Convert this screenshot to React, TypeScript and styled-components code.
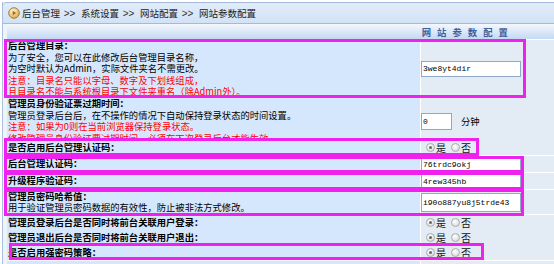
import React from "react"
import styled, { createGlobalStyle } from "styled-components"

const GlobalStyle = createGlobalStyle`
  html, body {
    margin: 0;
    overflow: hidden;
    background: #ffffff;
  }
  body {
    font-family: "Noto Sans CJK SC", "Noto Sans", sans-serif;
    color: #000;
  }
`

const Page = styled.div`
  margin-left: 2px;
  border-left: 1px solid #a9bfdd;
  min-height: 264px;
  background: #eef4fb;
`

const Crumb = styled.div`
  margin-top: 2px;
  height: 20px;
  border-top: 1px solid #a3badb;
  border-bottom: 1px solid #a3badb;
  border-top-left-radius: 4px;
  background: linear-gradient(#e2ecf9, #d2e2f5);
  display: flex;
  align-items: center;
  padding-left: 5px;
  font-size: 9.5px;
  color: #1a1a1a;
  white-space: nowrap;
`

const CrumbItem = styled.span`
  margin-left: 2px;
`

const CrumbSep = styled.span`
  width: 19px;
  text-align: center;
  font-family: "Liberation Sans", sans-serif;
  font-size: 10px;
  color: #333;
`

const Sheet = styled.div`
  margin-left: 4px;
  display: flex;
  flex-direction: column;
  gap: 1px;
  background: #ffffff;
`

const Caption = styled.div`
  height: 15px;
  background: linear-gradient(#f4f8fd, #c3d9f3);
  display: flex;
  align-items: center;
  justify-content: flex-end;
  padding-right: 40px;
  font-size: 9.4px;
  font-weight: bold;
  letter-spacing: 6px;
  color: #3f5f9b;
`

const Row = styled.div<{ $h: number }>`
  position: relative;
  display: grid;
  grid-template-columns: 413px 1fr;
  column-gap: 1px;
  height: ${p => p.$h}px;
`

const LabelCell = styled.div`
  background: #d5e7fc;
  padding-left: 1px;
  display: flex;
  flex-direction: column;
  justify-content: center;
  font-size: 9.3px;
  line-height: 11.5px;
  white-space: nowrap;
  overflow: visible;
`

const ValueCell = styled.div`
  background: #e3ebf5;
  display: flex;
  align-items: center;
`

const Title = styled.div`
  font-weight: bold;
`

const Line = styled.div<{ $warn?: boolean }>`
  color: ${p => (p.$warn ? "#ff0000" : "#000000")};
`

const TextBox = styled.input<{ $w: number; $h: number }>`
  box-sizing: border-box;
  width: ${p => p.$w}px;
  height: ${p => p.$h}px;
  margin: 0;
  padding: 0 1px;
  border: 1px solid #8fa8c8;
  background: #ffffff;
  font-family: "Liberation Mono", "DejaVu Sans Mono", monospace;
  font-size: 8px;
  color: #000;
  outline: none;
`

const Unit = styled.span`
  margin-left: 9px;
  font-size: 9.3px;
`

const RadioGroup = styled.div`
  display: flex;
  align-items: center;
  padding-left: 5px;
  font-size: 10px;
`

const RadioDot = styled.span<{ $on?: boolean }>`
  position: relative;
  box-sizing: border-box;
  width: 9px;
  height: 9px;
  border-radius: 50%;
  border: 1px solid #adadad;
  background: radial-gradient(circle at 40% 35%, #ffffff, #d3d3d3);
  &::after {
    content: "";
    display: ${p => (p.$on ? "block" : "none")};
    position: absolute;
    inset: 2px;
    border-radius: 50%;
    background: #666666;
  }
`

const RadioText = styled.span`
  margin: 0 5px 0 1px;
  color: #111;
`

const Highlight = styled.div<{ $l: number; $t: number; $w: number; $h: number }>`
  position: absolute;
  z-index: 2;
  left: ${p => p.$l}px;
  top: ${p => p.$t}px;
  width: ${p => p.$w}px;
  height: ${p => p.$h}px;
  box-sizing: border-box;
  border: 3px solid #f021ef;
  pointer-events: none;
`

function CrumbIcon() {
  return (
    <svg width="12" height="12" viewBox="0 0 12 12">
      <defs>
        <radialGradient id="ci" cx="40%" cy="35%" r="70%">
          <stop offset="0" stopColor="#fffbe8" />
          <stop offset="1" stopColor="#d8a43a" />
        </radialGradient>
      </defs>
      <circle cx="6" cy="6" r="5.3" fill="url(#ci)" stroke="#9c7432" strokeWidth="0.9" />
      <path d="M4.6 3.4 L8.2 6 L4.6 8.6 Z" fill="#b06d18" />
    </svg>
  )
}

function YesNo() {
  return (
    <RadioGroup>
      <RadioDot $on />
      <RadioText>是</RadioText>
      <RadioDot />
      <RadioText>否</RadioText>
    </RadioGroup>
  )
}

type Mark = { l: number; t: number; w: number; h: number }

type Setting = {
  title: string
  lines?: string[]
  warn?: string[]
  h: number
  control: React.ReactNode
  mark?: Mark
}

const path = ["后台管理", "系统设置", "网站配置", "网站参数配置"]

const settings: Setting[] = [
  {
    title: "后台管理目录：",
    lines: ["为了安全，您可以在此修改后台管理目录名称，", "为空时默认为Admin，实际文件夹名不需更改。"],
    warn: ["注意：目录名只能以字母、数字及下划线组成，", "且目录名不能与系统根目录下文件夹重名（除Admin外）。"],
    h: 57,
    control: <TextBox $w={100} $h={16} defaultValue="3we8yt4dir" />,
    mark: { l: -3, t: -1, w: 522, h: 59 },
  },
  {
    title: "管理员身份验证票过期时间：",
    lines: ["管理员登录后台后，在不操作的情况下自动保持登录状态的时间设置。"],
    warn: ["注意：如果为0则在当前浏览器保持登录状态。", "修改管理员身份验证票过期时间，必须在下次登录后台才能生效。"],
    h: 41,
    control: (
      <>
        <TextBox $w={31} $h={17} defaultValue="0" />
        <Unit>分钟</Unit>
      </>
    ),
  },
  {
    title: "是否启用后台管理认证码：",
    h: 15,
    control: <YesNo />,
    mark: { l: -3, t: -2, w: 475, h: 18 },
  },
  {
    title: "后台管理认证码：",
    h: 16,
    control: <TextBox $w={100} $h={16} defaultValue="76trdc9okj" />,
    mark: { l: -3, t: 0, w: 520, h: 17 },
  },
  {
    title: "升级程序验证码：",
    h: 16,
    control: <TextBox $w={100} $h={16} defaultValue="4rew345hb" />,
    mark: { l: -3, t: -1, w: 520, h: 18 },
  },
  {
    title: "管理员密码哈希值：",
    lines: ["用于验证管理员密码数据的有效性，防止被非法方式修改。"],
    h: 24,
    control: <TextBox $w={100} $h={19} defaultValue="i90o887yu8j5trde43" />,
    mark: { l: -3, t: -1, w: 520, h: 27 },
  },
  {
    title: "管理员登录后台是否同时将前台关联用户登录：",
    h: 14,
    control: <YesNo />,
  },
  {
    title: "管理员退出后台是否同时将前台关联用户退出：",
    h: 14,
    control: <YesNo />,
  },
  {
    title: "是否启用强密码策略：",
    h: 15,
    control: <YesNo />,
    mark: { l: 2, t: -2, w: 475, h: 17 },
  },
  {
    title: "",
    h: 15,
    control: null,
  },
]

export default function App() {
  return (
    <Page>
      <GlobalStyle />
      <Crumb>
        <CrumbIcon />
        {path.map((p, i) => (
          <React.Fragment key={p}>
            {i > 0 && <CrumbSep>&gt;&gt;</CrumbSep>}
            <CrumbItem>{p}</CrumbItem>
          </React.Fragment>
        ))}
      </Crumb>
      <Sheet>
        <Caption>网站参数配置</Caption>
        {settings.map((s, i) => (
          <Row key={i} $h={s.h}>
            <LabelCell>
              {s.title && <Title>{s.title}</Title>}
              {s.lines?.map(l => <Line key={l}>{l}</Line>)}
              {s.warn?.map(l => (
                <Line key={l} $warn>
                  {l}
                </Line>
              ))}
            </LabelCell>
            <ValueCell>{s.control}</ValueCell>
            {s.mark && <Highlight $l={s.mark.l} $t={s.mark.t} $w={s.mark.w} $h={s.mark.h} />}
          </Row>
        ))}
      </Sheet>
    </Page>
  )
}
